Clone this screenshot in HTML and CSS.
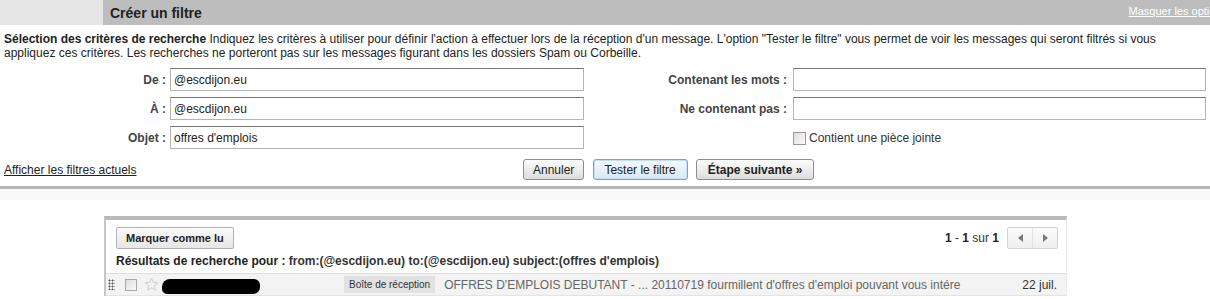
FILE: index.html
```html
<!DOCTYPE html>
<html lang="fr">
<head>
<meta charset="utf-8">
<title>Créer un filtre</title>
<link rel="stylesheet" href="styles.css">
</head>
<body>
<div class="page">
  <div class="header">
    <div class="hd-side"></div>
    <div class="hd-main">
      <span class="hd-title">Créer un filtre</span>
      <a class="hd-link" href="#">Masquer les options</a>
    </div>
  </div>

  <p class="desc"><b>Sélection des critères de recherche</b> Indiquez les critères à utiliser pour définir l'action à effectuer lors de la réception d'un message. L'option "Tester le filtre" vous permet de voir les messages qui seront filtrés si vous appliquez ces critères. Les recherches ne porteront pas sur les messages figurant dans les dossiers Spam ou Corbeille.</p>

  <div class="form">
    <label class="lbl">De :</label>
    <div class="field">@escdijon.eu</div>
    <label class="lbl lbl2">Contenant les mots :</label>
    <div class="field"></div>

    <label class="lbl">À :</label>
    <div class="field">@escdijon.eu</div>
    <label class="lbl lbl2">Ne contenant pas :</label>
    <div class="field"></div>

    <label class="lbl">Objet :</label>
    <div class="field">offres d'emplois</div>
    <span></span>
    <div class="attach"><span class="cb"></span>Contient une pièce jointe</div>
  </div>

  <div class="actions">
    <a class="link" href="#">Afficher les filtres actuels</a>
    <div class="btns">
      <span class="btn">Annuler</span>
      <span class="btn btn-focus">Tester le filtre</span>
      <span class="btn btn-bold">Étape suivante »</span>
    </div>
  </div>

  <div class="sep"></div>
  <div class="band"></div>

  <div class="panel">
    <div class="toolbar">
      <span class="btn btn-sm">Marquer comme lu</span>
      <div class="pager">
        <span class="count"><b>1</b> - <b>1</b> sur <b>1</b></span>
        <span class="pg">
          <span class="pg-b"><span class="tri tri-l"></span></span>
          <span class="pg-b"><span class="tri tri-r"></span></span>
        </span>
      </div>
    </div>
    <div class="results"><b>Résultats de recherche pour :</b> from:(@escdijon.eu) to:(@escdijon.eu) subject:(offres d'emplois)</div>
    <div class="row">
      <span class="handle"></span>
      <span class="cb cb-row"></span>
      <svg class="star" width="15" height="15" viewBox="0 0 15 15"><path d="M7.5 1.2 L9.3 5.3 L13.8 5.7 L10.4 8.7 L11.4 13.1 L7.5 10.8 L3.6 13.1 L4.6 8.7 L1.2 5.7 L5.7 5.3 Z" fill="none" stroke="#d0d0d0" stroke-width="1"/></svg>
      <span class="redact"></span>
      <span class="tag">Boîte de réception</span>
      <span class="subj">OFFRES D'EMPLOIS DEBUTANT - ... 20110719 fourmillent d'offres d'emploi pouvant vous intére</span>
      <span class="date">22 juil.</span>
    </div>
  </div>
</div>
</body>
</html>
```

FILE: styles.css
```css
html, body {
  margin: 0;
  padding: 0;
  overflow: hidden;
  background: #fff;
}
body {
  font-family: "Liberation Sans", Arial, sans-serif;
  font-size: 12px;
  color: #222;
}
.page {
  width: 1210px;
}
.header {
  display: flex;
  height: 25px;
  margin-right: -21px;
}
.hd-side {
  width: 103px;
  background: #e6e6e6;
}
.hd-main {
  flex: 1;
  background: #bdbdbd;
  display: flex;
  align-items: center;
  justify-content: space-between;
  padding-left: 7px;
}
.hd-title {
  font-weight: bold;
  font-size: 14px;
  color: #222;
}
.hd-link {
  color: #fff;
  font-size: 11px;
  white-space: nowrap;
  margin-top: -3px;
  padding-right: 4px;
}
.desc {
  margin: 7px 0 0;
  padding: 0 4px;
  line-height: 14px;
  color: #222;
}
.form {
  display: grid;
  grid-template-columns: 170px 414px 209px 413px;
  grid-auto-rows: 23px;
  row-gap: 6px;
  margin-top: 8px;
}
.lbl {
  font-weight: bold;
  color: #444;
  text-align: right;
  padding-right: 4px;
  display: flex;
  align-items: center;
  justify-content: flex-end;
}
.lbl2 {
  padding-right: 6px;
}
.field {
  box-sizing: border-box;
  border: 1px solid #b5b5b5;
  border-top-color: #777;
  padding: 0 3px;
  display: flex;
  align-items: center;
  color: #222;
}
.attach {
  display: flex;
  align-items: center;
  padding-top: 1px;
  color: #333;
}
.cb {
  display: inline-block;
  box-sizing: border-box;
  width: 13px;
  height: 13px;
  border: 1px solid #999;
  background: linear-gradient(135deg, #ddd, #fafafa);
  margin-right: 3px;
}
.actions {
  display: grid;
  grid-template-columns: 523px auto;
  align-items: center;
  margin-top: 10px;
  height: 21px;
}
.link {
  color: #222;
  padding-left: 4px;
}
.btns {
  display: flex;
  gap: 8px;
}
.btn {
  box-sizing: border-box;
  height: 21px;
  display: inline-flex;
  align-items: center;
  justify-content: center;
  padding: 0 9px;
  border: 1px solid #8e8e8e;
  border-radius: 3px;
  background: linear-gradient(#fdfdfd, #dcdcdc);
  color: #222;
  white-space: nowrap;
}
.btn-focus {
  border-color: #6fa7d8;
  background: linear-gradient(#f4f9fd, #dbe8f2);
  box-shadow: inset 0 0 0 1px #bfe0f5;
  padding: 0 11px 0 10px;
  margin-left: 1px;
}
.btn-bold {
  font-weight: bold;
  padding: 0 11px;
}
.sep {
  height: 3px;
  background: #b7b7b7;
  margin-top: 6px;
}
.band {
  height: 11px;
  background: #f9f9f9;
}
.panel {
  margin: 16px 0 0 104px;
  width: 963px;
  box-sizing: border-box;
  border-top: 4px solid #b9b9b9;
  border-left: 2px solid #c6c6c6;
  border-right: 1px solid #ececec;
}
.toolbar {
  display: flex;
  justify-content: space-between;
  align-items: center;
  padding: 7px 8px 0 10px;
}
.btn-sm {
  height: 22px;
  font-size: 11px;
  font-weight: bold;
  padding: 0 9px;
  border-color: #b3b3b3;
  border-radius: 2px;
  background: linear-gradient(#fafafa, #e6e6e6);
}
.pager {
  display: flex;
  align-items: center;
  gap: 8px;
}
.count {
  color: #333;
}
.count b {
  color: #222;
}
.pg {
  display: flex;
  box-sizing: border-box;
  height: 22px;
  border: 1px solid #d3d3d3;
  border-radius: 2px;
  background: linear-gradient(#fbfbfb, #efefef);
}
.pg-b {
  width: 24px;
  display: flex;
  align-items: center;
  justify-content: center;
}
.pg-b + .pg-b {
  border-left: 1px solid #e2e2e2;
}
.tri {
  width: 0;
  height: 0;
  border-top: 4px solid transparent;
  border-bottom: 4px solid transparent;
}
.tri-l {
  border-right: 5px solid #777;
}
.tri-r {
  border-left: 5px solid #777;
}
.results {
  padding: 5px 0 0 10px;
  line-height: 14px;
  color: #333;
  font-weight: bold;
  height: 19px;
}
.results b {
  color: #222;
}
.row {
  display: flex;
  align-items: center;
  height: 23px;
  box-sizing: border-box;
  border-top: 1px solid #dedede;
  border-bottom: 1px solid #e4e4e4;
  background: #f3f3f3;
  padding-left: 2px;
  padding-right: 9px;
}
.handle {
  width: 7px;
  height: 11px;
  margin-right: 10px;
  background:
    radial-gradient(circle, #555 0.8px, transparent 1.2px) 0 0 / 3px 3px;
}
.cb-row {
  width: 12px;
  height: 12px;
  border-color: #a8a8a8;
  margin-right: 7px;
}
.star {
  margin-right: 3px;
}
.redact {
  width: 98px;
  height: 15px;
  background: #000;
  border-radius: 8px 6px 7px 5px;
  margin-top: 3px;
}
.tag {
  margin-left: 84px;
  background: #e2e2e2;
  color: #333;
  font-size: 10px;
  height: 17px;
  display: flex;
  align-items: center;
  padding: 0 5px;
}
.subj {
  margin-left: 9px;
  color: #666;
  flex: 1;
  white-space: nowrap;
  overflow: hidden;
}
.date {
  color: #333;
}
```
